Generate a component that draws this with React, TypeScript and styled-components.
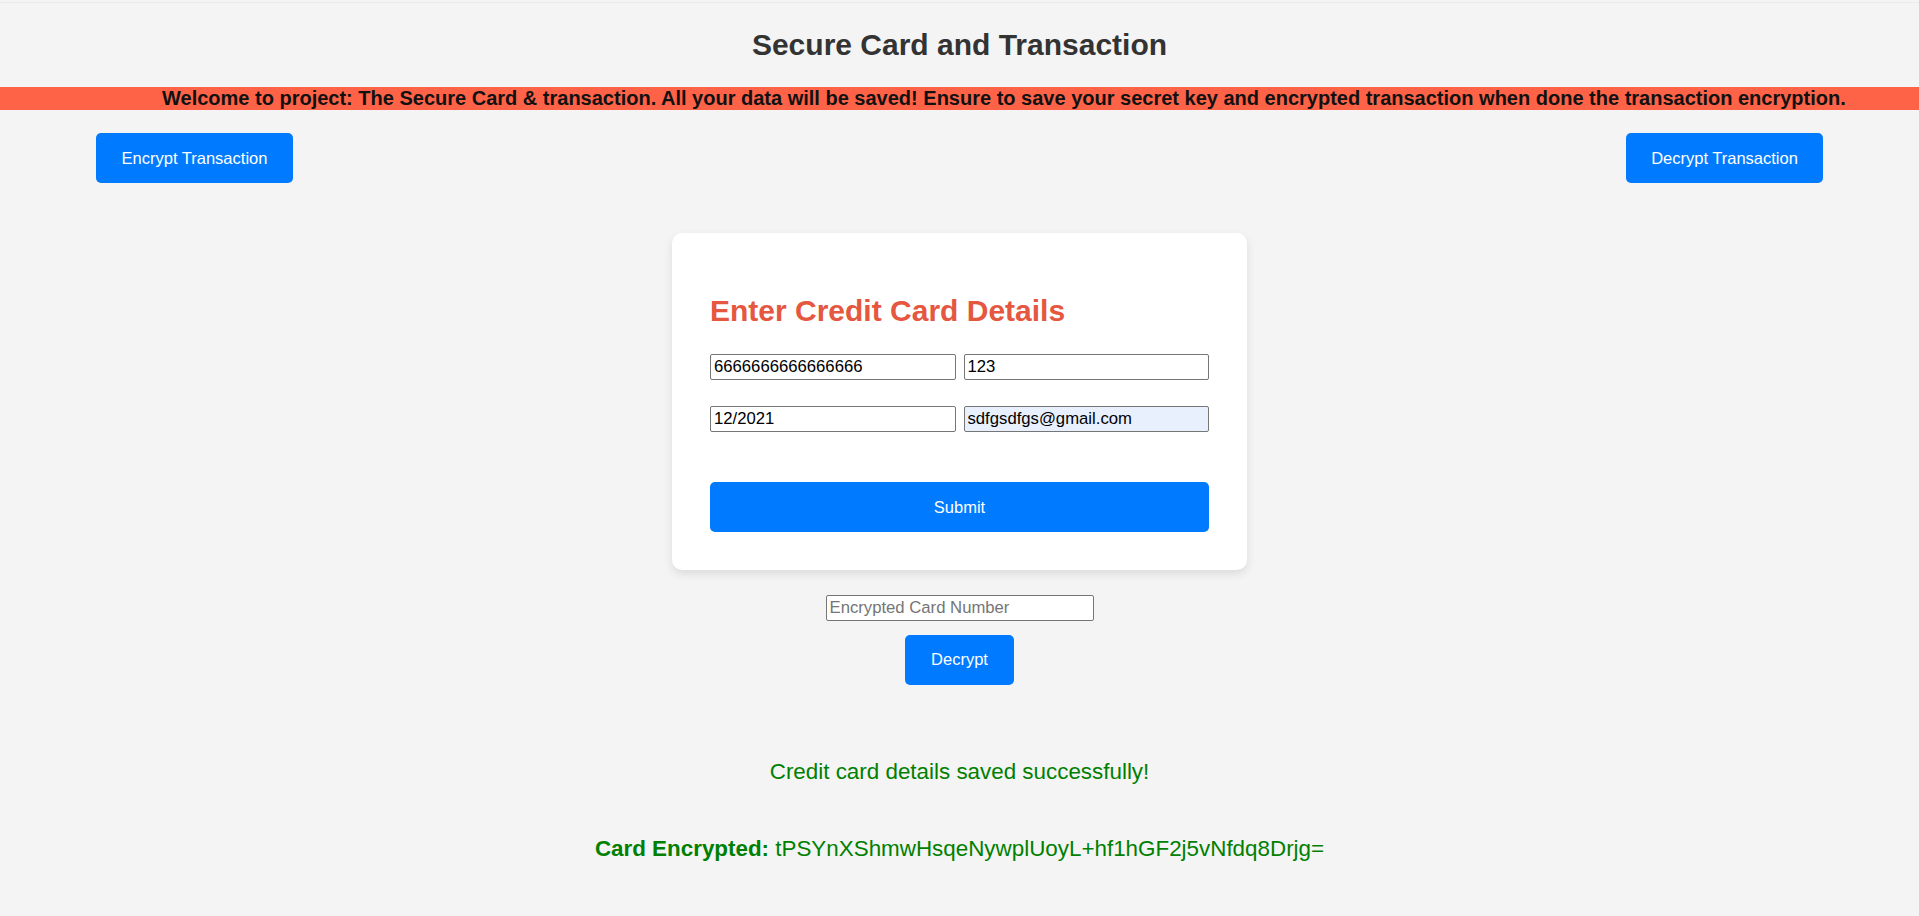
import React from "react";
import styled, { createGlobalStyle } from "styled-components";

const GlobalStyle = createGlobalStyle`
  html, body {
    margin: 0;
    padding: 0;
    background: #f4f4f4;
    font-family: "Liberation Sans", Arial, sans-serif;
  }
  * { box-sizing: border-box; }
`;

const Page = styled.div`
  display: flex;
  flex-direction: column;
  min-height: 916px;
`;

const TopRule = styled.div`
  height: 1px;
  margin-top: 2px;
  background: #e8eaed;
`;

const Title = styled.h1`
  margin: 25px 0 0;
  font-size: 30px;
  font-weight: bold;
  color: #333;
  text-align: center;
  line-height: normal;
`;

const Banner = styled.div`
  margin-top: 25px;
  height: 23px;
  line-height: 23px;
  background: #ff6347;
  color: #111;
  font-size: 20px;
  font-weight: bold;
  white-space: nowrap;
  overflow: hidden;
  padding-left: 162px;
`;

const ButtonRow = styled.div`
  display: flex;
  justify-content: space-between;
  padding: 0 96px;
  margin-top: 23px;
`;

const BlueButton = styled.button<{ $wide?: boolean }>`
  height: 50px;
  padding: 0 ${(p) => (p.$wide ? "0" : "26.5px")};
  width: ${(p) => (p.$wide ? "100%" : "auto")};
  min-width: ${(p) => (p.$wide ? "0" : "108px")};
  background: #007bff;
  color: #fff;
  border: none;
  border-radius: 5px;
  font-family: "Liberation Sans", Arial, sans-serif;
  font-size: 16.5px;
  cursor: pointer;
`;

const NavButton = styled(BlueButton)`
  width: 197px;
  padding: 0;
`;

const Card = styled.div`
  width: 575px;
  margin: 50px auto 0;
  padding: 38px;
  background: #fff;
  border-radius: 10px;
  box-shadow: 0 4px 10px rgba(0, 0, 0, 0.1);
`;

const CardHeading = styled.h2`
  margin: 23px 0 26px;
  font-size: 30px;
  font-weight: bold;
  color: #e5573f;
  line-height: normal;
`;

const FieldGrid = styled.div`
  display: grid;
  grid-template-columns: 1fr 1fr;
  column-gap: 8px;
  row-gap: 25.6px;
`;

const TextInput = styled.input<{ $filled?: boolean }>`
  height: 26px;
  width: 100%;
  padding: 0 3px;
  border: 1px solid #767676;
  border-radius: 2px;
  background: ${(p) => (p.$filled ? "#e8f0fe" : "#fff")};
  color: #000;
  font-family: "Liberation Sans", Arial, sans-serif;
  font-size: 16.7px;
  &::placeholder {
    color: #757575;
  }
`;

const SubmitWrap = styled.div`
  margin-top: 50.7px;
`;

const Lower = styled.div`
  display: flex;
  flex-direction: column;
  align-items: center;
`;

const DecryptInput = styled(TextInput)`
  width: 268px;
  margin-top: 25px;
`;

const DecryptWrap = styled.div`
  margin-top: 13.3px;
`;

const Message = styled.p<{ $gap: number }>`
  margin: ${(p) => p.$gap}px 0 0;
  font-size: 22.4px;
  color: #008000;
  text-align: center;
  line-height: normal;
`;

export default function App() {
  return (
    <>
      <GlobalStyle />
      <Page>
        <TopRule />
        <Title>Secure Card and Transaction</Title>
        <Banner>
          Welcome to project: The Secure Card &amp; transaction. All your data will be saved! Ensure to save your secret key and encrypted transaction when done the transaction encryption.
        </Banner>
        <ButtonRow>
          <NavButton>Encrypt Transaction</NavButton>
          <NavButton>Decrypt Transaction</NavButton>
        </ButtonRow>
        <Card>
          <CardHeading>Enter Credit Card Details</CardHeading>
          <FieldGrid>
            <TextInput defaultValue="6666666666666666" />
            <TextInput defaultValue="123" />
            <TextInput defaultValue="12/2021" />
            <TextInput $filled defaultValue="sdfgsdfgs@gmail.com" />
          </FieldGrid>
          <SubmitWrap>
            <BlueButton $wide>Submit</BlueButton>
          </SubmitWrap>
        </Card>
        <Lower>
          <DecryptInput placeholder="Encrypted Card Number" />
          <DecryptWrap>
            <BlueButton>Decrypt</BlueButton>
          </DecryptWrap>
        </Lower>
        <Message $gap={74.7}>Credit card details saved successfully!</Message>
        <Message $gap={51}>
          <b>Card Encrypted:</b> tPSYnXShmwHsqeNywplUoyL+hf1hGF2j5vNfdq8Drjg=
        </Message>
      </Page>
    </>
  );
}
